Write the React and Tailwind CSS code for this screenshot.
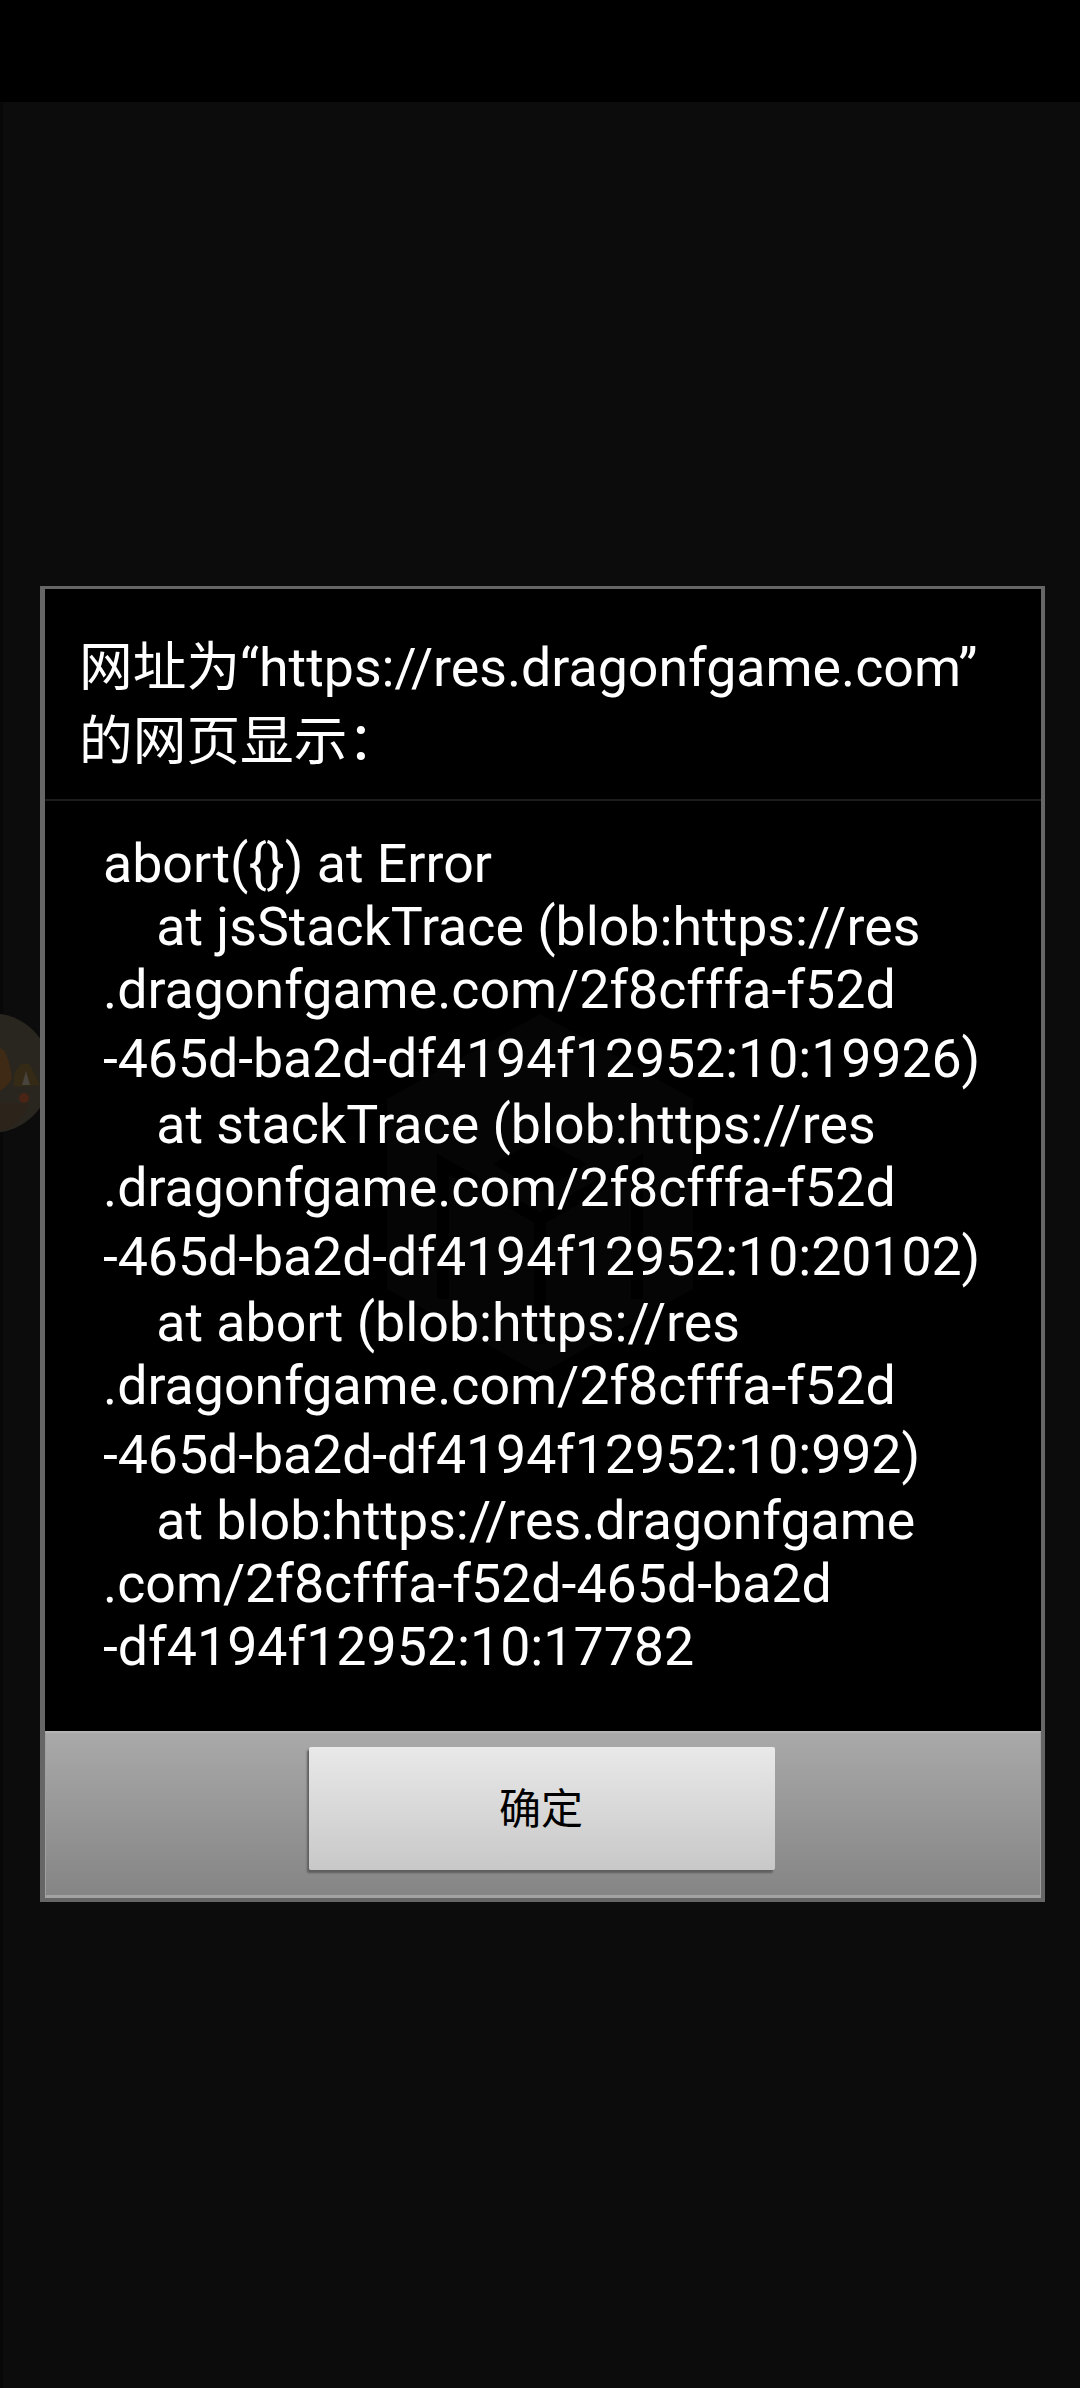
import React from "react";

const font = "font-['Roboto','Noto_Sans_CJK_SC',sans-serif]";

const lines = [
  { text: "abort({}) at Error", cls: "" },
  { text: "    at jsStackTrace (blob:https://res", cls: "" },
  { text: ".dragonfgame.com/2f8cfffa-f52d", cls: "" },
  { text: "-465d-ba2d-df4194f12952:10:19926)", cls: "mt-[6px] tracking-[-0.09px]" },
  { text: "    at stackTrace (blob:https://res", cls: "mt-[3px]" },
  { text: ".dragonfgame.com/2f8cfffa-f52d", cls: "" },
  { text: "-465d-ba2d-df4194f12952:10:20102)", cls: "mt-[6px] tracking-[-0.09px]" },
  { text: "    at abort (blob:https://res", cls: "mt-[3px]" },
  { text: ".dragonfgame.com/2f8cfffa-f52d", cls: "" },
  { text: "-465d-ba2d-df4194f12952:10:992)", cls: "mt-[6px] tracking-[-0.09px]" },
  { text: "    at blob:https://res.dragonfgame", cls: "mt-[3px]" },
  { text: ".com/2f8cfffa-f52d-465d-ba2d", cls: "" },
  { text: "-df4194f12952:10:17782", cls: "" },
];

// faint cube logo that shows through the dialog
function Watermark() {
  return (
    <svg className="absolute left-[342px] top-[213px]" width="306" height="360" viewBox="0 0 306 360" fill="none">
      <path d="M153 0 L306 85 V275 L153 360 L0 275 V85 Z" fill="#050505" />
      <path d="M56 285 V150 L153 205 L250 150 V285 M153 205 V330" stroke="#000" strokeWidth="12" />
      <path d="M153 125 L200 150 L153 178 L106 150 Z" fill="#000" />
    </svg>
  );
}

function Avatar() {
  return (
    <svg className="absolute left-0 top-[1013px]" width="40" height="120" viewBox="0 0 40 120">
      <circle cx="-9" cy="60" r="60" fill="#29251f" />
      <path d="M0 35 Q8 36 12 66 Q6 75 0 78 Z" fill="#3e2a15" />
      <path d="M14 62 Q20 46 30 52 L40 72 L14 74 Z" fill="#342a16" />
      <path d="M22 72 L26 58 L30 72 Z" fill="#47433d" />
      <circle cx="24" cy="85" r="5" fill="#4a2415" />
      <path d="M0 90 H30 Q22 112 0 118 Z" fill="#2c241a" />
    </svg>
  );
}

export default function App() {
  return (
    <div className={`relative h-[2388px] w-[1080px] overflow-hidden bg-[#0c0c0c] ${font}`}>
      <div className="h-[102px] bg-black" />
      <div className="h-[2286px] border-l-[3px] border-[#080808] pt-[484px] pl-[37px]">
        <div className="flex h-[1316px] w-[1005px] flex-col border-l-[5px] border-r-[4px] border-b-[4px] border-t-[3px] border-[#666666] bg-black">
          <div className="h-[212px] border-b-2 border-[#1c1c1c] pl-[34px] pt-[42px] text-[53.7px] leading-[74px] text-white">
            <div>网址为“https://res.dragonfgame.com”</div>
            <div>的网页显示：</div>
          </div>

          <div className="relative flex-1 pl-[58px] pt-[31px] text-[53.7px] leading-[63px] text-white">
            <Watermark />
            {lines.map((l, i) => (
              <div key={i} className={`relative whitespace-pre ${l.cls}`}>
                {l.text}
              </div>
            ))}
          </div>

          <div className="flex h-[167px] justify-center border-x border-t-2 border-b-[3px] border-x-[#a0a0a0] border-t-[#b4b4b4] border-b-[#a3a3a3] bg-gradient-to-b from-[#a9a9a9] to-[#858585] pr-[2px] pt-[14px]">
            <button className="h-[123px] w-[466px] rounded-[2px] bg-gradient-to-b from-[#e9e9e9] to-[#c8c8c8] pr-[2px] pt-[2px] text-[42px] text-black shadow-[-2px_3px_2px_#5f5f5f]">
              确定
            </button>
          </div>
        </div>
      </div>
      <Avatar />
    </div>
  );
}
